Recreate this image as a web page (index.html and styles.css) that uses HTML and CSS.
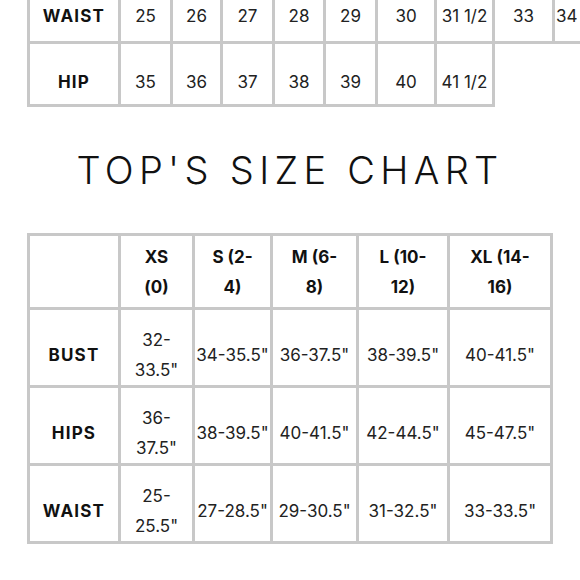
FILE: index.html
```html
<!DOCTYPE html>
<html lang="en">
<head>
<meta charset="utf-8">
<title>Size Chart</title>
<link rel="stylesheet" href="styles.css">
</head>
<body>
<div class="page">
  <table class="chart chart-bottoms">
    <colgroup>
      <col class="c-label"><col class="c-52"><col class="c-50"><col class="c-52"><col class="c-51"><col class="c-52"><col class="c-59"><col class="c-58"><col class="c-60"><col class="c-60">
    </colgroup>
    <tr class="row-waist">
      <th class="label">WAIST</th><td>25</td><td>26</td><td>27</td><td>28</td><td>29</td><td>30</td><td>31 1/2</td><td>33</td><td class="cut">34</td>
    </tr>
    <tr class="row-hip">
      <th class="label">HIP</th><td>35</td><td>36</td><td>37</td><td>38</td><td>39</td><td>40</td><td>41 1/2</td>
    </tr>
  </table>

  <h1 class="title">TOP'S SIZE CHART</h1>

  <table class="chart chart-tops">
    <colgroup>
      <col class="t-label"><col class="t-xs"><col class="t-s"><col class="t-m"><col class="t-l"><col class="t-xl">
    </colgroup>
    <tr class="head">
      <th></th><th>XS (0)</th><th>S (2-4)</th><th>M (6-8)</th><th>L (10-12)</th><th>XL (14-16)</th>
    </tr>
    <tr class="body">
      <th class="label">BUST</th><td>32-33.5"</td><td>34-35.5"</td><td>36-37.5"</td><td>38-39.5"</td><td>40-41.5"</td>
    </tr>
    <tr class="body">
      <th class="label">HIPS</th><td>36-37.5"</td><td>38-39.5"</td><td>40-41.5"</td><td>42-44.5"</td><td>45-47.5"</td>
    </tr>
    <tr class="body">
      <th class="label">WAIST</th><td>25-25.5"</td><td>27-28.5"</td><td>29-30.5"</td><td>31-32.5"</td><td>33-33.5"</td>
    </tr>
  </table>
</div>
</body>
</html>
```

FILE: styles.css
```css
html, body {
  margin: 0;
  padding: 0;
  background: #ffffff;
}

body {
  width: 580px;
  height: 580px;
  overflow: hidden;
  font-family: Inter, "Open Sans", "DejaVu Sans", sans-serif;
  color: #1a1a1a;
}

.page {
  padding-left: 27px;
}

.chart {
  border-collapse: collapse;
  table-layout: fixed;
}

.chart th,
.chart td {
  border: 3px solid #c8c8c8;
  padding: 0 1px;
  text-align: center;
  font-size: 17px;
  line-height: 30px;
  box-sizing: border-box;
}

.chart th {
  font-weight: 700;
  color: #111111;
}

.chart th.label {
  letter-spacing: 0.07em;
}

.chart td {
  font-weight: 400;
  color: #222222;
}

/* bottoms chart (partially scrolled off the top) */
.chart-bottoms {
  width: 588px;
  margin-top: -12px;
}

.c-label { width: 91px; }
.c-50 { width: 50px; }
.c-51 { width: 51px; }
.c-52 { width: 52px; }
.c-58 { width: 58px; }
.c-59 { width: 59px; }
.c-60 { width: 60px; }

.row-waist th,
.row-waist td {
  height: 53px;
  vertical-align: middle;
}

.row-hip th,
.row-hip td {
  height: 63px;
  padding-top: 15px;
}

.chart td.cut {
  text-align: left;
  white-space: nowrap;
  overflow: hidden;
}

/* title */
.title {
  margin: 0 0 0 -27px;
  padding: 40px 0 0 0;
  height: 126px;
  box-sizing: border-box;
  text-align: center;
  font-family: Inter, "Open Sans", sans-serif;
  font-weight: 300;
  font-size: 38px;
  letter-spacing: 0.14em;
  line-height: 46px;
  color: #111111;
}

/* tops chart */
.chart-tops {
  width: 526px;
}

.t-label { width: 91px; }
.t-xs { width: 74px; }
.t-s { width: 78px; }
.t-m { width: 86px; }
.t-l { width: 91px; }
.t-xl { width: 103px; }

.chart-tops .head th {
  height: 74px;
  padding: 0 15px;
  vertical-align: middle;
}

.chart-tops .body th,
.chart-tops .body td {
  height: 78px;
  padding-top: 15px;
  vertical-align: middle;
}
```
